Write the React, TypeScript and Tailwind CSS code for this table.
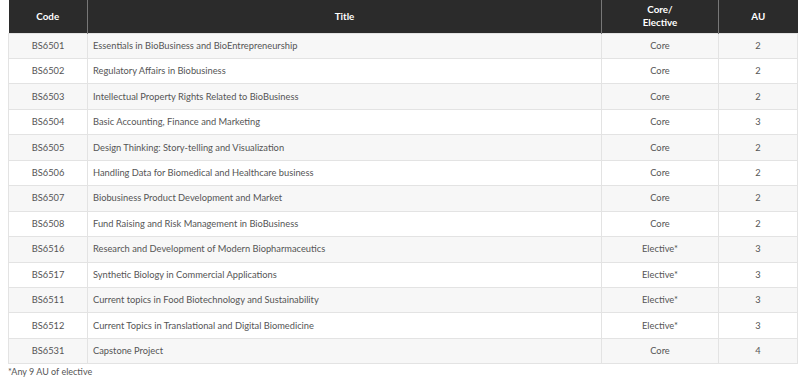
import React from "react";

const rows: [string, string, string, string][] = [
  ["BS6501", "Essentials in BioBusiness and BioEntrepreneurship", "Core", "2"],
  ["BS6502", "Regulatory Affairs in Biobusiness", "Core", "2"],
  ["BS6503", "Intellectual Property Rights Related to BioBusiness", "Core", "2"],
  ["BS6504", "Basic Accounting, Finance and Marketing", "Core", "3"],
  ["BS6505", "Design Thinking: Story-telling and Visualization", "Core", "2"],
  ["BS6506", "Handling Data for Biomedical and Healthcare business", "Core", "2"],
  ["BS6507", "Biobusiness Product Development and Market", "Core", "2"],
  ["BS6508", "Fund Raising and Risk Management in BioBusiness", "Core", "2"],
  ["BS6516", "Research and Development of Modern Biopharmaceutics", "Elective*", "3"],
  ["BS6517", "Synthetic Biology in Commercial Applications", "Elective*", "3"],
  ["BS6511", "Current topics in Food Biotechnology and Sustainability", "Elective*", "3"],
  ["BS6512", "Current Topics in Translational and Digital Biomedicine", "Elective*", "3"],
  ["BS6531", "Capstone Project", "Core", "4"],
];

export default function App() {
  return (
    <div className="w-[806px] h-[379px] bg-white overflow-hidden" style={{ fontFamily: "Lato, 'Open Sans', sans-serif" }}>
      <div className="pl-[8px] pr-[9px]">
        <table className="w-[789px] table-fixed border-collapse text-[9.3px] text-[#555]">
          <colgroup>
            <col className="w-[79px]" />
            <col className="w-[514px]" />
            <col className="w-[117px]" />
            <col className="w-[79px]" />
          </colgroup>
          <thead>
            <tr className="h-[33px] bg-[#2b2b2b] text-white font-bold text-[9.8px]">
              <th className="text-center border-r border-[#777] leading-[13px]">Code</th>
              <th className="text-center border-r border-[#777] leading-[13px]">Title</th>
              <th className="text-center border-r border-[#777] leading-[13px]">
                Core/
                <br />
                Elective
              </th>
              <th className="text-center leading-[13px]">AU</th>
            </tr>
          </thead>
          <tbody>
            {rows.map((r, i) => (
              <tr key={r[0]} className={`h-[25.46px] ${i % 2 === 0 ? "bg-[#f7f7f7]" : "bg-white"}`}>
                <td className="text-center border border-[#e3e3e3]">{r[0]}</td>
                <td className="pl-[5px] border border-[#e3e3e3]">{r[1]}</td>
                <td className="text-center border border-[#e3e3e3]">{r[2]}</td>
                <td className="text-center border border-[#e3e3e3]">{r[3]}</td>
              </tr>
            ))}
          </tbody>
        </table>
        <div className="text-[9px] text-[#555] mt-[1px]">*Any 9 AU of elective</div>
      </div>
    </div>
  );
}
